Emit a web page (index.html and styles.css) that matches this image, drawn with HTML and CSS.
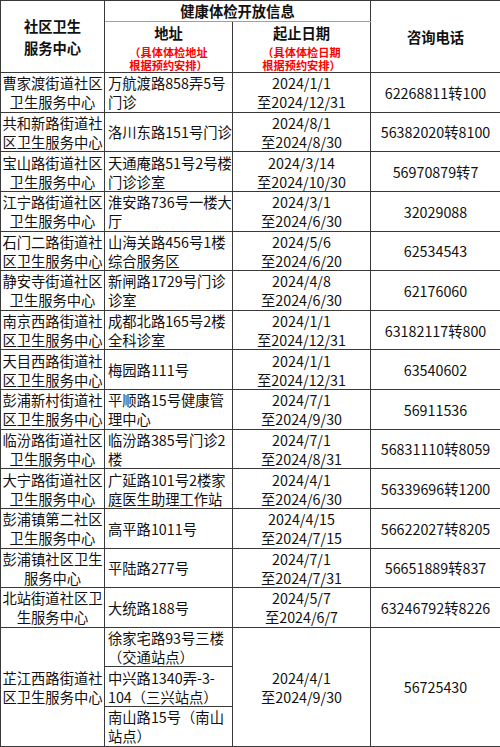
FILE: index.html
```html
<!DOCTYPE html>
<html lang="zh-CN">
<head>
<meta charset="utf-8">
<title>健康体检开放信息</title>
<link rel="stylesheet" href="styles.css">
</head>
<body>
<table class="sheet">
  <colgroup>
    <col class="c-name">
    <col class="c-addr">
    <col class="c-date">
    <col class="c-tel">
  </colgroup>
  <thead>
    <tr class="h1">
      <th rowspan="2" class="th-name">社区卫生<br>服务中心</th>
      <th colspan="2" class="th-group">健康体检开放信息</th>
      <th rowspan="2" class="th-tel">咨询电话</th>
    </tr>
    <tr class="h2">
      <th class="th-sub"><div class="th-title">地址</div><div class="note"><span class="note-line">（具体体检地址</span><span class="note-line">根据预约安排）</span></div></th>
      <th class="th-sub"><div class="th-title">起止日期</div><div class="note"><span class="note-line">（具体体检日期</span><span class="note-line">根据预约安排）</span></div></th>
    </tr>
  </thead>
  <tbody>
    <tr><td class="name">曹家渡街道社区<br>卫生服务中心</td><td class="addr">万航渡路858弄5号<br>门诊</td><td class="date">2024/1/1<br>至2024/12/31</td><td class="tel">62268811转100</td></tr>
    <tr><td class="name">共和新路街道社<br>区卫生服务中心</td><td class="addr">洛川东路151号门诊</td><td class="date">2024/8/1<br>至2024/8/30</td><td class="tel">56382020转8100</td></tr>
    <tr><td class="name">宝山路街道社区<br>卫生服务中心</td><td class="addr">天通庵路51号2号楼<br>门诊诊室</td><td class="date">2024/3/14<br>至2024/10/30</td><td class="tel">56970879转7</td></tr>
    <tr><td class="name">江宁路街道社区<br>卫生服务中心</td><td class="addr">淮安路736号一楼大<br>厅</td><td class="date">2024/3/1<br>至2024/6/30</td><td class="tel">32029088</td></tr>
    <tr><td class="name">石门二路街道社<br>区卫生服务中心</td><td class="addr">山海关路456号1楼<br>综合服务区</td><td class="date">2024/5/6<br>至2024/6/20</td><td class="tel">62534543</td></tr>
    <tr><td class="name">静安寺街道社区<br>卫生服务中心</td><td class="addr">新闸路1729号门诊<br>诊室</td><td class="date">2024/4/8<br>至2024/6/30</td><td class="tel">62176060</td></tr>
    <tr><td class="name">南京西路街道社<br>区卫生服务中心</td><td class="addr">成都北路165号2楼<br>全科诊室</td><td class="date">2024/1/1<br>至2024/12/31</td><td class="tel">63182117转800</td></tr>
    <tr><td class="name">天目西路街道社<br>区卫生服务中心</td><td class="addr">梅园路111号</td><td class="date">2024/1/1<br>至2024/12/31</td><td class="tel">63540602</td></tr>
    <tr><td class="name">彭浦新村街道社<br>区卫生服务中心</td><td class="addr">平顺路15号健康管<br>理中心</td><td class="date">2024/7/1<br>至2024/9/30</td><td class="tel">56911536</td></tr>
    <tr><td class="name">临汾路街道社区<br>卫生服务中心</td><td class="addr">临汾路385号门诊2<br>楼</td><td class="date">2024/7/1<br>至2024/8/31</td><td class="tel">56831110转8059</td></tr>
    <tr><td class="name">大宁路街道社区<br>卫生服务中心</td><td class="addr">广延路101号2楼家<br>庭医生助理工作站</td><td class="date">2024/4/1<br>至2024/6/30</td><td class="tel">56339696转1200</td></tr>
    <tr><td class="name">彭浦镇第二社区<br>卫生服务中心</td><td class="addr">高平路1011号</td><td class="date">2024/4/15<br>至2024/7/15</td><td class="tel">56622027转8205</td></tr>
    <tr><td class="name">彭浦镇社区卫生<br>服务中心</td><td class="addr">平陆路277号</td><td class="date">2024/7/1<br>至2024/7/31</td><td class="tel">56651889转837</td></tr>
    <tr><td class="name">北站街道社区卫<br>生服务中心</td><td class="addr">大统路188号</td><td class="date">2024/5/7<br>至2024/6/7</td><td class="tel">63246792转8226</td></tr>
    <tr class="sub"><td rowspan="3" class="name">芷江西路街道社<br>区卫生服务中心</td><td class="addr">徐家宅路93号三楼<br>（交通站点）</td><td rowspan="3" class="date">2024/4/1<br>至2024/9/30</td><td rowspan="3" class="tel">56725430</td></tr>
    <tr class="sub"><td class="addr">中兴路1340弄-3-<br>104（三兴站点）</td></tr>
    <tr class="sub"><td class="addr">南山路15号（南山<br>站点）</td></tr>
  </tbody>
</table>
</body>
</html>
```
FILE: styles.css
```css
html, body {
  margin: 0;
  padding: 0;
  background: #ffffff;
}

body {
  font-family: "Noto Sans CJK SC", "Noto Sans", sans-serif;
  font-size: 14.3px;
  line-height: 19px;
  color: #111111;
}

.sheet {
  border-collapse: collapse;
  table-layout: fixed;
  width: 500px;
}

.c-name { width: 104px; }
.c-addr { width: 128px; }
.c-date { width: 138px; }
.c-tel { width: 130px; }

.sheet th,
.sheet td {
  border: 1px solid #3a3a3a;
  padding: 0 1px;
  overflow: hidden;
  white-space: nowrap;
}

.sheet th {
  font-weight: bold;
  text-align: center;
}

.h1 { height: 21px; }
.h2 { height: 50px; }

.sheet .th-name {
  vertical-align: middle;
  line-height: 22px;
  padding-top: 1px;
}

.sheet .th-group {
  vertical-align: middle;
  line-height: 18px;
  border-bottom-color: #a0a0a0;
}

.sheet .th-tel {
  vertical-align: top;
  padding-top: 26px;
}

.sheet .th-sub {
  vertical-align: top;
  padding-top: 1px;
}

.th-title {
  line-height: 20px;
}

.note {
  color: #ff0000;
  font-size: 11.2px;
  line-height: 13px;
  margin-top: 3px;
}

.note-line {
  display: block;
  height: 13px;
  overflow: visible;
}

tbody tr { height: 39.64px; }
tbody tr.sub { height: 39.67px; }

.sheet td {
  vertical-align: middle;
  font-weight: normal;
}

.name { text-align: center; }
.sheet .addr { text-align: left; padding-left: 3px; }
.date { text-align: center; }
.tel { text-align: center; }
```
